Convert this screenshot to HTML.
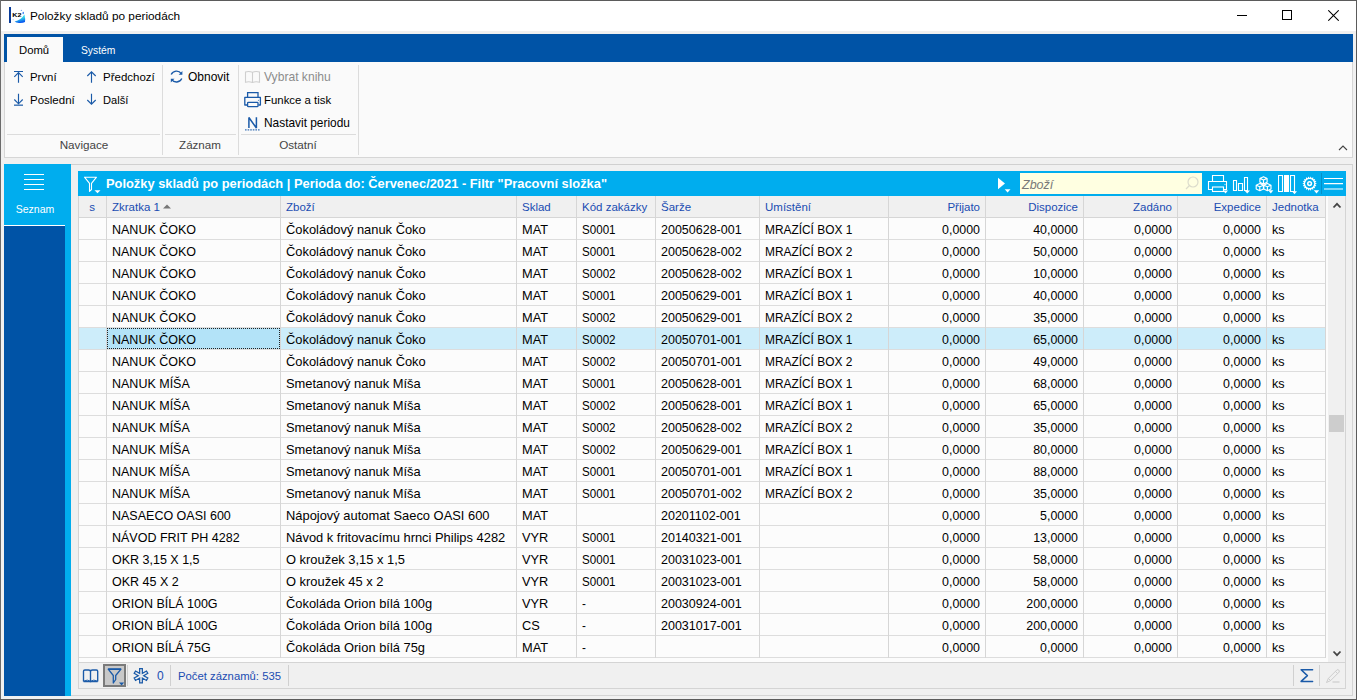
<!DOCTYPE html><html><head><meta charset="utf-8"><style>
*{margin:0;padding:0;box-sizing:border-box}
html,body{width:1357px;height:700px;overflow:hidden;background:#f0f0f0;font-family:"Liberation Sans",sans-serif;}
.a{position:absolute}
.t{position:absolute;white-space:nowrap;line-height:14px}
</style></head><body><div class="a" style="left:0px;top:0px;width:1357px;height:700px;background:#f0f0f0"></div>
<div class="a" style="left:0px;top:0px;width:1357px;height:31px;background:#ffffff"></div>
<svg class="a" style="left:6px;top:4px" width="24" height="22" viewBox="0 0 24 22"><defs><linearGradient id="g1" x1="0" y1="0" x2="0.3" y2="1"><stop offset="0" stop-color="#20e8f0"/><stop offset="0.55" stop-color="#30d0e8"/><stop offset="1" stop-color="#0a5af0"/></linearGradient></defs><rect x="3" y="3" width="2" height="16" fill="#0a3d9a"/><text x="6.2" y="12.9" font-family="Liberation Sans" font-weight="bold" font-size="5.6" textLength="9.2" lengthAdjust="spacingAndGlyphs" fill="#000">K2</text><path d="M18.4 10.6Q19.6 15.5 19 18Q17 19.3 13 19Q10 18.8 8.6 17.4Q15 16.4 18.4 10.6Z" fill="url(#g1)"/><ellipse cx="17.2" cy="9" rx="0.7" ry="1.3" fill="#2a78f0"/><circle cx="15.4" cy="6.4" r="0.7" fill="#4a90f0" opacity="0.7"/><circle cx="7.2" cy="15.6" r="0.6" fill="#80b0f0" opacity="0.6"/></svg>
<div class="t" style="left:30px;top:9px;font-size:11.8px;color:#000">Položky skladů po periodách</div>
<div class="a" style="left:1237px;top:15px;width:10px;height:1px;background:#000"></div>
<div class="a" style="left:1282px;top:10px;width:10px;height:10px;border:1px solid #000"></div>
<svg class="a" style="left:1328px;top:10px" width="11" height="11" viewBox="0 0 11 11"><path d="M0.3 0.3L10.7 10.7M10.7 0.3L0.3 10.7" stroke="#000" stroke-width="1.05"/></svg>
<div class="a" style="left:0px;top:0px;width:1357px;height:1px;background:#5b5b5b"></div>
<div class="a" style="left:0px;top:0px;width:1px;height:700px;background:#6b6b6b"></div>
<div class="a" style="left:1356px;top:0px;width:1px;height:700px;background:#5b5b5b"></div>
<div class="a" style="left:0px;top:699px;width:1357px;height:1px;background:#5b5b5b"></div>
<div class="a" style="left:4px;top:34px;width:1349px;height:28px;background:#0053a6"></div>
<div class="a" style="left:7px;top:37px;width:56px;height:25px;background:#fafafa"></div>
<div class="t" style="left:19px;top:43px;font-size:11.3px;color:#000">Domů</div>
<div class="t" style="left:81px;top:44px;font-size:10.3px;color:#fff">Systém</div>
<div class="a" style="left:4px;top:62px;width:1349px;height:96px;background:#fafafa;border:1px solid #d6d6d6;border-top:none"></div>
<div class="a" style="left:162px;top:65px;width:1px;height:90px;background:#dcdcdc"></div>
<div class="a" style="left:238px;top:65px;width:1px;height:90px;background:#dcdcdc"></div>
<div class="a" style="left:358px;top:65px;width:1px;height:90px;background:#dcdcdc"></div>
<div class="a" style="left:7px;top:134px;width:153px;height:1px;background:#dcdcdc"></div>
<div class="a" style="left:165px;top:134px;width:71px;height:1px;background:#dcdcdc"></div>
<div class="a" style="left:241px;top:134px;width:115px;height:1px;background:#dcdcdc"></div>
<div class="t" style="left:-16px;width:200px;text-align:center;top:138px;font-size:11.7px;color:#444">Navigace</div>
<div class="t" style="left:100px;width:200px;text-align:center;top:138px;font-size:11.6px;color:#444">Záznam</div>
<div class="t" style="left:198px;width:200px;text-align:center;top:138px;font-size:11.7px;color:#444">Ostatní</div>
<div class="t" style="left:30px;top:70px;font-size:11.4px;color:#000">První</div>
<div class="t" style="left:30px;top:93px;font-size:11.5px;color:#000">Poslední</div>
<div class="t" style="left:103px;top:70px;font-size:11.5px;color:#000">Předchozí</div>
<div class="t" style="left:103px;top:93px;font-size:11.1px;color:#000">Další</div>
<div class="t" style="left:188px;top:70px;font-size:12px;color:#000">Obnovit</div>
<div class="t" style="left:264px;top:70px;font-size:12.1px;color:#8c8c8c">Vybrat knihu</div>
<div class="t" style="left:264px;top:93px;font-size:11.4px;color:#000">Funkce a tisk</div>
<div class="t" style="left:264px;top:116px;font-size:11.9px;color:#000">Nastavit periodu</div>
<svg class="a" style="left:13px;top:69px" width="12" height="16" viewBox="0 0 12 16"><path d="M1 2.5H10M5.5 3.2V13.8M1.3 7.8L5.5 3.6L9.7 7.8" stroke="#1a5aa8" stroke-width="1.15" fill="none"/></svg>
<svg class="a" style="left:13px;top:92px" width="12" height="16" viewBox="0 0 12 16"><path d="M5.5 1.8V12.3M1.3 7.5L5.5 11.8L9.7 7.5" stroke="#1a5aa8" stroke-width="1.15" fill="none"/><path d="M1 13.2H10" stroke="#1a5aa8" stroke-width="1.5" opacity="0.8"/></svg>
<svg class="a" style="left:86px;top:69px" width="12" height="16" viewBox="0 0 12 16"><path d="M5.5 2.5V13.8M1.3 7L5.5 2.8L9.7 7" stroke="#1a5aa8" stroke-width="1.15" fill="none"/></svg>
<svg class="a" style="left:86px;top:92px" width="12" height="16" viewBox="0 0 12 16"><path d="M5.5 1.8V12.5M1.3 8L5.5 12.2L9.7 8" stroke="#1a5aa8" stroke-width="1.15" fill="none"/></svg>
<svg class="a" style="left:166px;top:66px" width="22" height="22" viewBox="0 0 22 22"><path d="M5.2 8.6A5.8 5.8 0 0 1 15.3 7.6M15.8 12.5A5.8 5.8 0 0 1 5.6 13.4" stroke="#1a5aa8" stroke-width="1.35" fill="none"/><path d="M16.4 5V8.7H12.7Z" fill="#1a5aa8"/><path d="M4.8 16.4V12.7H8.5Z" fill="#1a5aa8"/></svg>
<svg class="a" style="left:244px;top:70px" width="18" height="14" viewBox="0 0 18 14"><path d="M1.5 2Q5 0.8 8.5 2.3Q12 0.8 15.5 2V12.2Q12 11.2 8.5 12.5Q5 11.2 1.5 12.2Z M8.5 2.3V12.5" stroke="#cfcfcf" stroke-width="1.1" fill="none"/></svg>
<svg class="a" style="left:243px;top:91px" width="20" height="17" viewBox="0 0 20 17"><path d="M4.6 6.3V1.6H15V6.3" stroke="#1a5aa8" stroke-width="1.3" fill="none"/><path d="M4 14H1.8V6.4H17.4V14H15.4" stroke="#1a5aa8" stroke-width="1.3" fill="none" stroke-linejoin="round"/><rect x="4.6" y="11.3" width="10.4" height="4.4" rx="0.8" stroke="#1a5aa8" stroke-width="1.3" fill="#fafafa"/><circle cx="15.4" cy="9.2" r="0.5" fill="#1a5aa8"/></svg>
<svg class="a" style="left:244px;top:115px" width="18" height="17" viewBox="0 0 18 17"><path d="M4.9 13V2.5L12.4 13V2.2" stroke="#1a5aa8" stroke-width="1.5" fill="none" stroke-linejoin="bevel"/><path d="M1 14.8H16.5" stroke="#1a5aa8" stroke-width="1.3" stroke-dasharray="1.6 1" opacity="0.85"/></svg>
<svg class="a" style="left:1338px;top:145px" width="10" height="6" viewBox="0 0 10 6"><path d="M1 5L5 1L9 5" stroke="#444" stroke-width="1.1" fill="none"/></svg>
<div class="a" style="left:71px;top:164px;width:1282px;height:532px;background:#f0f0f0;border-top:1px solid #d0d0d0;border-right:1px solid #d4d4d4;border-bottom:1px solid #d4d4d4"></div>
<div class="a" style="left:4px;top:164px;width:67px;height:532px;background:#00adee"></div>
<div class="a" style="left:4px;top:226px;width:61px;height:470px;background:#0053a6"></div>
<div class="a" style="left:4px;top:225px;width:61px;height:1px;background:#ffffff"></div>
<div class="a" style="left:24px;top:174px;width:20px;height:1px;background:#fff"></div>
<div class="a" style="left:24px;top:179px;width:20px;height:1px;background:#fff"></div>
<div class="a" style="left:24px;top:184px;width:20px;height:1px;background:#fff"></div>
<div class="a" style="left:24px;top:189px;width:20px;height:1px;background:#fff"></div>
<div class="t" style="left:-65px;width:200px;text-align:center;top:202px;font-size:10.5px;color:#fff">Seznam</div>
<div class="a" style="left:78px;top:171px;width:1268px;height:518px;background:#fcfcfc;border:1px solid #d4d4d4"></div>
<div class="a" style="left:78px;top:171px;width:1268px;height:25px;background:#00adee"></div>
<svg class="a" style="left:83px;top:175px" width="20" height="20" viewBox="0 0 20 20"><path d="M1.5 2.2H13.5L8.5 8.3V14.5L6.5 16.3V8.3Z" stroke="#fff" stroke-width="1.1" fill="none" stroke-linejoin="round"/><path d="M11.5 15.2H17.5L14.5 18.3Z" fill="#fff"/></svg>
<div class="t" style="left:106px;top:177px;font-size:13.3px;font-weight:bold;color:#fff;transform:scaleX(0.967);transform-origin:0 0">Položky skladů po periodách | Perioda do: Červenec/2021 - Filtr "Pracovní složka"</div>
<svg class="a" style="left:997px;top:176px" width="15" height="18" viewBox="0 0 15 18"><path d="M1 1.8L8 7.5L1 13.2Z" fill="#fff"/><path d="M7.7 13.2H13.5L10.6 16.5Z" fill="#fff"/></svg>
<div class="a" style="left:1020px;top:173px;width:182px;height:21px;background:#ffffe1"></div>
<div class="t" style="left:1022px;top:178px;font-size:12.5px;font-style:italic;color:#787878">Zboží</div>
<svg class="a" style="left:1184px;top:175px" width="16" height="16" viewBox="0 0 16 16"><circle cx="9" cy="7" r="5" stroke="#dcdccc" stroke-width="1.2" fill="none"/><path d="M5.5 10.5L2 14" stroke="#dcdccc" stroke-width="1.2"/></svg>
<svg class="a" style="left:1207px;top:174px" width="22" height="21" viewBox="0 0 22 21"><path d="M5.5 7.5V1.5H16.5V7.5" stroke="#fff" stroke-width="1.1" fill="none"/><path d="M5 15.5H1.5V7.5H19.5V15.5H17" stroke="#fff" stroke-width="1.1" fill="none"/><rect x="5.5" y="13" width="11" height="4.5" stroke="#fff" stroke-width="1.1" fill="#00adee"/><path d="M17.5 10.5H18.5" stroke="#fff" stroke-width="0.8"/><path d="M16 16.5H21L18.5 19.5Z" fill="#fff"/></svg>
<svg class="a" style="left:1232px;top:175px" width="20" height="20" viewBox="0 0 20 20"><path d="M1.5 5.5H4.5V15.5H1.5ZM6.5 8.5H10.5V15.5H6.5ZM12.5 2.5H15.5V15.5H12.5Z" stroke="#fff" stroke-width="1.1" fill="none"/><path d="M12.5 15.5H18L15.2 18.5Z" fill="#fff"/></svg>
<svg class="a" style="left:1255px;top:175px" width="20" height="20" viewBox="0 0 20 20"><path d="M8.5 1.7000000000000002L12.1 3.4V7.2L8.5 8.9L4.9 7.2V3.4ZM4.9 3.4L8.5 5L12.1 3.4M8.5 5V8.9M4.8 8.5L8.4 10.200000000000001V14.0L4.8 15.700000000000001L1.1999999999999997 14.0V10.200000000000001ZM1.1999999999999997 10.200000000000001L4.8 11.8L8.4 10.200000000000001M4.8 11.8V15.700000000000001M12.4 8.5L16.0 10.200000000000001V14.0L12.4 15.700000000000001L8.8 14.0V10.200000000000001ZM8.8 10.200000000000001L12.4 11.8L16.0 10.200000000000001M12.4 11.8V15.700000000000001" stroke="#fff" stroke-width="1.15" fill="none" stroke-linejoin="round"/><path d="M13.3 15.2H18.3L15.8 18.5Z" fill="#fff"/></svg>
<svg class="a" style="left:1278px;top:175px" width="20" height="20" viewBox="0 0 20 20"><path d="M0.5 0.5H4.5V16.5H0.5ZM12.5 0.5H16.5V16.5H12.5Z" stroke="#fff" stroke-width="1.1" fill="none"/><rect x="6" y="0" width="5" height="17" fill="#fff"/><path d="M14 16.2H19L16.5 19.2Z" fill="#fff"/></svg>
<svg class="a" style="left:1302px;top:176px" width="20" height="19" viewBox="0 0 20 19"><polygon points="14.90,7.60 13.11,8.57 14.46,10.10 12.45,10.40 13.19,12.29 11.20,11.89 11.25,13.92 9.52,12.86 8.87,14.79 7.60,13.20 6.33,14.79 5.68,12.86 3.95,13.92 4.00,11.89 2.01,12.29 2.75,10.40 0.74,10.10 2.09,8.57 0.30,7.60 2.09,6.63 0.74,5.10 2.75,4.80 2.01,2.91 4.00,3.31 3.95,1.28 5.68,2.34 6.33,0.41 7.60,2.00 8.87,0.41 9.52,2.34 11.25,1.28 11.20,3.31 13.19,2.91 12.45,4.80 14.46,5.10 13.11,6.63" fill="#fff"/><circle cx="7.6" cy="7.6" r="4.5" fill="#00adee"/><circle cx="7.6" cy="7.6" r="2.6" fill="#fff"/><circle cx="7.6" cy="7.6" r="1.1" fill="#00adee"/><path d="M11.8 14.3H17.2L14.5 17.5Z" fill="#fff"/></svg>
<div class="a" style="left:1321px;top:173px;width:1px;height:21px;background:#0590c8"></div>
<svg class="a" style="left:1324px;top:174px" width="20" height="18" viewBox="0 0 20 18"><path d="M0 4.5H19M0 9.6H19M0 15H19" stroke="#fff" stroke-width="1.05"/></svg>
<div class="a" style="left:79px;top:196px;width:1247px;height:21px;background:#f0f0f0"></div>
<div class="a" style="left:79px;top:217px;width:1247px;height:1px;background:#d6d6d6"></div>
<div class="a" style="left:79px;top:239px;width:1247px;height:1px;background:#dddddd"></div>
<div class="a" style="left:79px;top:261px;width:1247px;height:1px;background:#dddddd"></div>
<div class="a" style="left:79px;top:283px;width:1247px;height:1px;background:#dddddd"></div>
<div class="a" style="left:79px;top:305px;width:1247px;height:1px;background:#dddddd"></div>
<div class="a" style="left:79px;top:327px;width:1247px;height:1px;background:#dddddd"></div>
<div class="a" style="left:79px;top:328px;width:1247px;height:21px;background:#cdedfa"></div>
<div class="a" style="left:107px;top:328px;width:173px;height:21px;background:#b3e3f8"></div>
<div class="a" style="left:107px;top:328px;width:173px;height:21px;border:1px dotted #222"></div>
<div class="a" style="left:79px;top:349px;width:1247px;height:1px;background:#dddddd"></div>
<div class="a" style="left:79px;top:371px;width:1247px;height:1px;background:#dddddd"></div>
<div class="a" style="left:79px;top:393px;width:1247px;height:1px;background:#dddddd"></div>
<div class="a" style="left:79px;top:415px;width:1247px;height:1px;background:#dddddd"></div>
<div class="a" style="left:79px;top:437px;width:1247px;height:1px;background:#dddddd"></div>
<div class="a" style="left:79px;top:459px;width:1247px;height:1px;background:#dddddd"></div>
<div class="a" style="left:79px;top:481px;width:1247px;height:1px;background:#dddddd"></div>
<div class="a" style="left:79px;top:503px;width:1247px;height:1px;background:#dddddd"></div>
<div class="a" style="left:79px;top:525px;width:1247px;height:1px;background:#dddddd"></div>
<div class="a" style="left:79px;top:547px;width:1247px;height:1px;background:#dddddd"></div>
<div class="a" style="left:79px;top:569px;width:1247px;height:1px;background:#dddddd"></div>
<div class="a" style="left:79px;top:591px;width:1247px;height:1px;background:#dddddd"></div>
<div class="a" style="left:79px;top:613px;width:1247px;height:1px;background:#dddddd"></div>
<div class="a" style="left:79px;top:635px;width:1247px;height:1px;background:#dddddd"></div>
<div class="a" style="left:79px;top:657px;width:1247px;height:1px;background:#dddddd"></div>
<div class="a" style="left:106px;top:196px;width:1px;height:462px;background:#d6d6d6"></div>
<div class="a" style="left:280px;top:196px;width:1px;height:462px;background:#d6d6d6"></div>
<div class="a" style="left:516px;top:196px;width:1px;height:462px;background:#d6d6d6"></div>
<div class="a" style="left:576px;top:196px;width:1px;height:462px;background:#d6d6d6"></div>
<div class="a" style="left:655px;top:196px;width:1px;height:462px;background:#d6d6d6"></div>
<div class="a" style="left:759px;top:196px;width:1px;height:462px;background:#d6d6d6"></div>
<div class="a" style="left:888px;top:196px;width:1px;height:462px;background:#d6d6d6"></div>
<div class="a" style="left:985px;top:196px;width:1px;height:462px;background:#d6d6d6"></div>
<div class="a" style="left:1083px;top:196px;width:1px;height:462px;background:#d6d6d6"></div>
<div class="a" style="left:1177px;top:196px;width:1px;height:462px;background:#d6d6d6"></div>
<div class="a" style="left:1266px;top:196px;width:1px;height:462px;background:#d6d6d6"></div>
<div class="a" style="left:1325px;top:196px;width:1px;height:462px;background:#d6d6d6"></div>
<div class="t" style="left:-8px;width:200px;text-align:center;top:200px;font-size:11.5px;color:#1a4cb2">s</div>
<div class="t" style="left:112px;top:200px;font-size:11.5px;color:#1a4cb2">Zkratka 1</div>
<div class="t" style="left:286px;top:200px;font-size:11.5px;color:#1a4cb2">Zboží</div>
<div class="t" style="left:522px;top:200px;font-size:11.5px;color:#1a4cb2">Sklad</div>
<div class="t" style="left:582px;top:200px;font-size:11.5px;color:#1a4cb2">Kód zakázky</div>
<div class="t" style="left:661px;top:200px;font-size:11.5px;color:#1a4cb2">Šarže</div>
<div class="t" style="left:765px;top:200px;font-size:11.5px;color:#1a4cb2">Umístění</div>
<div class="t" style="right:377px;top:200px;font-size:11.5px;color:#1a4cb2">Přijato</div>
<div class="t" style="right:279px;top:200px;font-size:11.5px;color:#1a4cb2">Dispozice</div>
<div class="t" style="right:185px;top:200px;font-size:11.5px;color:#1a4cb2">Zadáno</div>
<div class="t" style="right:96px;top:200px;font-size:11.5px;color:#1a4cb2">Expedice</div>
<div class="t" style="left:1272px;top:200px;font-size:11.5px;color:#1a4cb2">Jednotka</div>
<svg class="a" style="left:162px;top:203px" width="10" height="6"><path d="M1 5.5L5 1.5L9 5.5Z" fill="#777"/></svg>
<div class="t" style="left:112px;top:223px;font-size:12.5px;color:#000">NANUK ČOKO</div>
<div class="t" style="left:286px;top:223px;font-size:12.9px;color:#000">Čokoládový nanuk Čoko</div>
<div class="t" style="left:522px;top:223px;font-size:12.8px;color:#000">MAT</div>
<div class="t" style="left:582px;top:223px;font-size:12.5px;color:#000;transform:scaleX(0.928);transform-origin:0 0">S0001</div>
<div class="t" style="left:661px;top:223px;font-size:12.5px;color:#000">20050628-001</div>
<div class="t" style="left:765px;top:223px;font-size:12.5px;color:#000;transform:scaleX(0.952);transform-origin:0 0">MRAZÍCÍ BOX 1</div>
<div class="t" style="right:377px;top:223px;font-size:12.4px;color:#000">0,0000</div>
<div class="t" style="right:279px;top:223px;font-size:12.4px;color:#000">40,0000</div>
<div class="t" style="right:185px;top:223px;font-size:12.4px;color:#000">0,0000</div>
<div class="t" style="right:96px;top:223px;font-size:12.4px;color:#000">0,0000</div>
<div class="t" style="left:1272px;top:223px;font-size:12.6px;color:#000">ks</div>
<div class="t" style="left:112px;top:245px;font-size:12.5px;color:#000">NANUK ČOKO</div>
<div class="t" style="left:286px;top:245px;font-size:12.9px;color:#000">Čokoládový nanuk Čoko</div>
<div class="t" style="left:522px;top:245px;font-size:12.8px;color:#000">MAT</div>
<div class="t" style="left:582px;top:245px;font-size:12.5px;color:#000;transform:scaleX(0.928);transform-origin:0 0">S0001</div>
<div class="t" style="left:661px;top:245px;font-size:12.5px;color:#000">20050628-002</div>
<div class="t" style="left:765px;top:245px;font-size:12.5px;color:#000;transform:scaleX(0.952);transform-origin:0 0">MRAZÍCÍ BOX 2</div>
<div class="t" style="right:377px;top:245px;font-size:12.4px;color:#000">0,0000</div>
<div class="t" style="right:279px;top:245px;font-size:12.4px;color:#000">50,0000</div>
<div class="t" style="right:185px;top:245px;font-size:12.4px;color:#000">0,0000</div>
<div class="t" style="right:96px;top:245px;font-size:12.4px;color:#000">0,0000</div>
<div class="t" style="left:1272px;top:245px;font-size:12.6px;color:#000">ks</div>
<div class="t" style="left:112px;top:267px;font-size:12.5px;color:#000">NANUK ČOKO</div>
<div class="t" style="left:286px;top:267px;font-size:12.9px;color:#000">Čokoládový nanuk Čoko</div>
<div class="t" style="left:522px;top:267px;font-size:12.8px;color:#000">MAT</div>
<div class="t" style="left:582px;top:267px;font-size:12.5px;color:#000;transform:scaleX(0.928);transform-origin:0 0">S0002</div>
<div class="t" style="left:661px;top:267px;font-size:12.5px;color:#000">20050628-002</div>
<div class="t" style="left:765px;top:267px;font-size:12.5px;color:#000;transform:scaleX(0.952);transform-origin:0 0">MRAZÍCÍ BOX 1</div>
<div class="t" style="right:377px;top:267px;font-size:12.4px;color:#000">0,0000</div>
<div class="t" style="right:279px;top:267px;font-size:12.4px;color:#000">10,0000</div>
<div class="t" style="right:185px;top:267px;font-size:12.4px;color:#000">0,0000</div>
<div class="t" style="right:96px;top:267px;font-size:12.4px;color:#000">0,0000</div>
<div class="t" style="left:1272px;top:267px;font-size:12.6px;color:#000">ks</div>
<div class="t" style="left:112px;top:289px;font-size:12.5px;color:#000">NANUK ČOKO</div>
<div class="t" style="left:286px;top:289px;font-size:12.9px;color:#000">Čokoládový nanuk Čoko</div>
<div class="t" style="left:522px;top:289px;font-size:12.8px;color:#000">MAT</div>
<div class="t" style="left:582px;top:289px;font-size:12.5px;color:#000;transform:scaleX(0.928);transform-origin:0 0">S0001</div>
<div class="t" style="left:661px;top:289px;font-size:12.5px;color:#000">20050629-001</div>
<div class="t" style="left:765px;top:289px;font-size:12.5px;color:#000;transform:scaleX(0.952);transform-origin:0 0">MRAZÍCÍ BOX 1</div>
<div class="t" style="right:377px;top:289px;font-size:12.4px;color:#000">0,0000</div>
<div class="t" style="right:279px;top:289px;font-size:12.4px;color:#000">40,0000</div>
<div class="t" style="right:185px;top:289px;font-size:12.4px;color:#000">0,0000</div>
<div class="t" style="right:96px;top:289px;font-size:12.4px;color:#000">0,0000</div>
<div class="t" style="left:1272px;top:289px;font-size:12.6px;color:#000">ks</div>
<div class="t" style="left:112px;top:311px;font-size:12.5px;color:#000">NANUK ČOKO</div>
<div class="t" style="left:286px;top:311px;font-size:12.9px;color:#000">Čokoládový nanuk Čoko</div>
<div class="t" style="left:522px;top:311px;font-size:12.8px;color:#000">MAT</div>
<div class="t" style="left:582px;top:311px;font-size:12.5px;color:#000;transform:scaleX(0.928);transform-origin:0 0">S0002</div>
<div class="t" style="left:661px;top:311px;font-size:12.5px;color:#000">20050629-001</div>
<div class="t" style="left:765px;top:311px;font-size:12.5px;color:#000;transform:scaleX(0.952);transform-origin:0 0">MRAZÍCÍ BOX 2</div>
<div class="t" style="right:377px;top:311px;font-size:12.4px;color:#000">0,0000</div>
<div class="t" style="right:279px;top:311px;font-size:12.4px;color:#000">35,0000</div>
<div class="t" style="right:185px;top:311px;font-size:12.4px;color:#000">0,0000</div>
<div class="t" style="right:96px;top:311px;font-size:12.4px;color:#000">0,0000</div>
<div class="t" style="left:1272px;top:311px;font-size:12.6px;color:#000">ks</div>
<div class="t" style="left:112px;top:333px;font-size:12.5px;color:#000">NANUK ČOKO</div>
<div class="t" style="left:286px;top:333px;font-size:12.9px;color:#000">Čokoládový nanuk Čoko</div>
<div class="t" style="left:522px;top:333px;font-size:12.8px;color:#000">MAT</div>
<div class="t" style="left:582px;top:333px;font-size:12.5px;color:#000;transform:scaleX(0.928);transform-origin:0 0">S0002</div>
<div class="t" style="left:661px;top:333px;font-size:12.5px;color:#000">20050701-001</div>
<div class="t" style="left:765px;top:333px;font-size:12.5px;color:#000;transform:scaleX(0.952);transform-origin:0 0">MRAZÍCÍ BOX 1</div>
<div class="t" style="right:377px;top:333px;font-size:12.4px;color:#000">0,0000</div>
<div class="t" style="right:279px;top:333px;font-size:12.4px;color:#000">65,0000</div>
<div class="t" style="right:185px;top:333px;font-size:12.4px;color:#000">0,0000</div>
<div class="t" style="right:96px;top:333px;font-size:12.4px;color:#000">0,0000</div>
<div class="t" style="left:1272px;top:333px;font-size:12.6px;color:#000">ks</div>
<div class="t" style="left:112px;top:355px;font-size:12.5px;color:#000">NANUK ČOKO</div>
<div class="t" style="left:286px;top:355px;font-size:12.9px;color:#000">Čokoládový nanuk Čoko</div>
<div class="t" style="left:522px;top:355px;font-size:12.8px;color:#000">MAT</div>
<div class="t" style="left:582px;top:355px;font-size:12.5px;color:#000;transform:scaleX(0.928);transform-origin:0 0">S0002</div>
<div class="t" style="left:661px;top:355px;font-size:12.5px;color:#000">20050701-001</div>
<div class="t" style="left:765px;top:355px;font-size:12.5px;color:#000;transform:scaleX(0.952);transform-origin:0 0">MRAZÍCÍ BOX 2</div>
<div class="t" style="right:377px;top:355px;font-size:12.4px;color:#000">0,0000</div>
<div class="t" style="right:279px;top:355px;font-size:12.4px;color:#000">49,0000</div>
<div class="t" style="right:185px;top:355px;font-size:12.4px;color:#000">0,0000</div>
<div class="t" style="right:96px;top:355px;font-size:12.4px;color:#000">0,0000</div>
<div class="t" style="left:1272px;top:355px;font-size:12.6px;color:#000">ks</div>
<div class="t" style="left:112px;top:377px;font-size:12.5px;color:#000">NANUK MÍŠA</div>
<div class="t" style="left:286px;top:377px;font-size:12.9px;color:#000">Smetanový nanuk Míša</div>
<div class="t" style="left:522px;top:377px;font-size:12.8px;color:#000">MAT</div>
<div class="t" style="left:582px;top:377px;font-size:12.5px;color:#000;transform:scaleX(0.928);transform-origin:0 0">S0001</div>
<div class="t" style="left:661px;top:377px;font-size:12.5px;color:#000">20050628-001</div>
<div class="t" style="left:765px;top:377px;font-size:12.5px;color:#000;transform:scaleX(0.952);transform-origin:0 0">MRAZÍCÍ BOX 1</div>
<div class="t" style="right:377px;top:377px;font-size:12.4px;color:#000">0,0000</div>
<div class="t" style="right:279px;top:377px;font-size:12.4px;color:#000">68,0000</div>
<div class="t" style="right:185px;top:377px;font-size:12.4px;color:#000">0,0000</div>
<div class="t" style="right:96px;top:377px;font-size:12.4px;color:#000">0,0000</div>
<div class="t" style="left:1272px;top:377px;font-size:12.6px;color:#000">ks</div>
<div class="t" style="left:112px;top:399px;font-size:12.5px;color:#000">NANUK MÍŠA</div>
<div class="t" style="left:286px;top:399px;font-size:12.9px;color:#000">Smetanový nanuk Míša</div>
<div class="t" style="left:522px;top:399px;font-size:12.8px;color:#000">MAT</div>
<div class="t" style="left:582px;top:399px;font-size:12.5px;color:#000;transform:scaleX(0.928);transform-origin:0 0">S0002</div>
<div class="t" style="left:661px;top:399px;font-size:12.5px;color:#000">20050628-001</div>
<div class="t" style="left:765px;top:399px;font-size:12.5px;color:#000;transform:scaleX(0.952);transform-origin:0 0">MRAZÍCÍ BOX 1</div>
<div class="t" style="right:377px;top:399px;font-size:12.4px;color:#000">0,0000</div>
<div class="t" style="right:279px;top:399px;font-size:12.4px;color:#000">65,0000</div>
<div class="t" style="right:185px;top:399px;font-size:12.4px;color:#000">0,0000</div>
<div class="t" style="right:96px;top:399px;font-size:12.4px;color:#000">0,0000</div>
<div class="t" style="left:1272px;top:399px;font-size:12.6px;color:#000">ks</div>
<div class="t" style="left:112px;top:421px;font-size:12.5px;color:#000">NANUK MÍŠA</div>
<div class="t" style="left:286px;top:421px;font-size:12.9px;color:#000">Smetanový nanuk Míša</div>
<div class="t" style="left:522px;top:421px;font-size:12.8px;color:#000">MAT</div>
<div class="t" style="left:582px;top:421px;font-size:12.5px;color:#000;transform:scaleX(0.928);transform-origin:0 0">S0002</div>
<div class="t" style="left:661px;top:421px;font-size:12.5px;color:#000">20050628-002</div>
<div class="t" style="left:765px;top:421px;font-size:12.5px;color:#000;transform:scaleX(0.952);transform-origin:0 0">MRAZÍCÍ BOX 2</div>
<div class="t" style="right:377px;top:421px;font-size:12.4px;color:#000">0,0000</div>
<div class="t" style="right:279px;top:421px;font-size:12.4px;color:#000">35,0000</div>
<div class="t" style="right:185px;top:421px;font-size:12.4px;color:#000">0,0000</div>
<div class="t" style="right:96px;top:421px;font-size:12.4px;color:#000">0,0000</div>
<div class="t" style="left:1272px;top:421px;font-size:12.6px;color:#000">ks</div>
<div class="t" style="left:112px;top:443px;font-size:12.5px;color:#000">NANUK MÍŠA</div>
<div class="t" style="left:286px;top:443px;font-size:12.9px;color:#000">Smetanový nanuk Míša</div>
<div class="t" style="left:522px;top:443px;font-size:12.8px;color:#000">MAT</div>
<div class="t" style="left:582px;top:443px;font-size:12.5px;color:#000;transform:scaleX(0.928);transform-origin:0 0">S0002</div>
<div class="t" style="left:661px;top:443px;font-size:12.5px;color:#000">20050629-001</div>
<div class="t" style="left:765px;top:443px;font-size:12.5px;color:#000;transform:scaleX(0.952);transform-origin:0 0">MRAZÍCÍ BOX 1</div>
<div class="t" style="right:377px;top:443px;font-size:12.4px;color:#000">0,0000</div>
<div class="t" style="right:279px;top:443px;font-size:12.4px;color:#000">80,0000</div>
<div class="t" style="right:185px;top:443px;font-size:12.4px;color:#000">0,0000</div>
<div class="t" style="right:96px;top:443px;font-size:12.4px;color:#000">0,0000</div>
<div class="t" style="left:1272px;top:443px;font-size:12.6px;color:#000">ks</div>
<div class="t" style="left:112px;top:465px;font-size:12.5px;color:#000">NANUK MÍŠA</div>
<div class="t" style="left:286px;top:465px;font-size:12.9px;color:#000">Smetanový nanuk Míša</div>
<div class="t" style="left:522px;top:465px;font-size:12.8px;color:#000">MAT</div>
<div class="t" style="left:582px;top:465px;font-size:12.5px;color:#000;transform:scaleX(0.928);transform-origin:0 0">S0001</div>
<div class="t" style="left:661px;top:465px;font-size:12.5px;color:#000">20050701-001</div>
<div class="t" style="left:765px;top:465px;font-size:12.5px;color:#000;transform:scaleX(0.952);transform-origin:0 0">MRAZÍCÍ BOX 1</div>
<div class="t" style="right:377px;top:465px;font-size:12.4px;color:#000">0,0000</div>
<div class="t" style="right:279px;top:465px;font-size:12.4px;color:#000">88,0000</div>
<div class="t" style="right:185px;top:465px;font-size:12.4px;color:#000">0,0000</div>
<div class="t" style="right:96px;top:465px;font-size:12.4px;color:#000">0,0000</div>
<div class="t" style="left:1272px;top:465px;font-size:12.6px;color:#000">ks</div>
<div class="t" style="left:112px;top:487px;font-size:12.5px;color:#000">NANUK MÍŠA</div>
<div class="t" style="left:286px;top:487px;font-size:12.9px;color:#000">Smetanový nanuk Míša</div>
<div class="t" style="left:522px;top:487px;font-size:12.8px;color:#000">MAT</div>
<div class="t" style="left:582px;top:487px;font-size:12.5px;color:#000;transform:scaleX(0.928);transform-origin:0 0">S0001</div>
<div class="t" style="left:661px;top:487px;font-size:12.5px;color:#000">20050701-002</div>
<div class="t" style="left:765px;top:487px;font-size:12.5px;color:#000;transform:scaleX(0.952);transform-origin:0 0">MRAZÍCÍ BOX 2</div>
<div class="t" style="right:377px;top:487px;font-size:12.4px;color:#000">0,0000</div>
<div class="t" style="right:279px;top:487px;font-size:12.4px;color:#000">35,0000</div>
<div class="t" style="right:185px;top:487px;font-size:12.4px;color:#000">0,0000</div>
<div class="t" style="right:96px;top:487px;font-size:12.4px;color:#000">0,0000</div>
<div class="t" style="left:1272px;top:487px;font-size:12.6px;color:#000">ks</div>
<div class="t" style="left:112px;top:509px;font-size:12.5px;color:#000">NASAECO OASI 600</div>
<div class="t" style="left:286px;top:509px;font-size:12.9px;color:#000">Nápojový automat Saeco OASI 600</div>
<div class="t" style="left:522px;top:509px;font-size:12.8px;color:#000">MAT</div>
<div class="t" style="left:661px;top:509px;font-size:12.5px;color:#000">20201102-001</div>
<div class="t" style="right:377px;top:509px;font-size:12.4px;color:#000">0,0000</div>
<div class="t" style="right:279px;top:509px;font-size:12.4px;color:#000">5,0000</div>
<div class="t" style="right:185px;top:509px;font-size:12.4px;color:#000">0,0000</div>
<div class="t" style="right:96px;top:509px;font-size:12.4px;color:#000">0,0000</div>
<div class="t" style="left:1272px;top:509px;font-size:12.6px;color:#000">ks</div>
<div class="t" style="left:112px;top:531px;font-size:12.5px;color:#000">NÁVOD FRIT PH 4282</div>
<div class="t" style="left:286px;top:531px;font-size:12.9px;color:#000">Návod k fritovacímu hrnci Philips 4282</div>
<div class="t" style="left:522px;top:531px;font-size:12.8px;color:#000">VYR</div>
<div class="t" style="left:582px;top:531px;font-size:12.5px;color:#000;transform:scaleX(0.928);transform-origin:0 0">S0001</div>
<div class="t" style="left:661px;top:531px;font-size:12.5px;color:#000">20140321-001</div>
<div class="t" style="right:377px;top:531px;font-size:12.4px;color:#000">0,0000</div>
<div class="t" style="right:279px;top:531px;font-size:12.4px;color:#000">13,0000</div>
<div class="t" style="right:185px;top:531px;font-size:12.4px;color:#000">0,0000</div>
<div class="t" style="right:96px;top:531px;font-size:12.4px;color:#000">0,0000</div>
<div class="t" style="left:1272px;top:531px;font-size:12.6px;color:#000">ks</div>
<div class="t" style="left:112px;top:553px;font-size:12.5px;color:#000">OKR 3,15 X 1,5</div>
<div class="t" style="left:286px;top:553px;font-size:12.9px;color:#000">O kroužek 3,15 x 1,5</div>
<div class="t" style="left:522px;top:553px;font-size:12.8px;color:#000">VYR</div>
<div class="t" style="left:582px;top:553px;font-size:12.5px;color:#000;transform:scaleX(0.928);transform-origin:0 0">S0001</div>
<div class="t" style="left:661px;top:553px;font-size:12.5px;color:#000">20031023-001</div>
<div class="t" style="right:377px;top:553px;font-size:12.4px;color:#000">0,0000</div>
<div class="t" style="right:279px;top:553px;font-size:12.4px;color:#000">58,0000</div>
<div class="t" style="right:185px;top:553px;font-size:12.4px;color:#000">0,0000</div>
<div class="t" style="right:96px;top:553px;font-size:12.4px;color:#000">0,0000</div>
<div class="t" style="left:1272px;top:553px;font-size:12.6px;color:#000">ks</div>
<div class="t" style="left:112px;top:575px;font-size:12.5px;color:#000">OKR 45 X 2</div>
<div class="t" style="left:286px;top:575px;font-size:12.9px;color:#000">O kroužek 45 x 2</div>
<div class="t" style="left:522px;top:575px;font-size:12.8px;color:#000">VYR</div>
<div class="t" style="left:582px;top:575px;font-size:12.5px;color:#000;transform:scaleX(0.928);transform-origin:0 0">S0001</div>
<div class="t" style="left:661px;top:575px;font-size:12.5px;color:#000">20031023-001</div>
<div class="t" style="right:377px;top:575px;font-size:12.4px;color:#000">0,0000</div>
<div class="t" style="right:279px;top:575px;font-size:12.4px;color:#000">58,0000</div>
<div class="t" style="right:185px;top:575px;font-size:12.4px;color:#000">0,0000</div>
<div class="t" style="right:96px;top:575px;font-size:12.4px;color:#000">0,0000</div>
<div class="t" style="left:1272px;top:575px;font-size:12.6px;color:#000">ks</div>
<div class="t" style="left:112px;top:597px;font-size:12.5px;color:#000">ORION BÍLÁ 100G</div>
<div class="t" style="left:286px;top:597px;font-size:12.9px;color:#000">Čokoláda Orion bílá 100g</div>
<div class="t" style="left:522px;top:597px;font-size:12.8px;color:#000">VYR</div>
<div class="t" style="left:582px;top:597px;font-size:12.5px;color:#000;transform:scaleX(0.928);transform-origin:0 0">-</div>
<div class="t" style="left:661px;top:597px;font-size:12.5px;color:#000">20030924-001</div>
<div class="t" style="right:377px;top:597px;font-size:12.4px;color:#000">0,0000</div>
<div class="t" style="right:279px;top:597px;font-size:12.4px;color:#000">200,0000</div>
<div class="t" style="right:185px;top:597px;font-size:12.4px;color:#000">0,0000</div>
<div class="t" style="right:96px;top:597px;font-size:12.4px;color:#000">0,0000</div>
<div class="t" style="left:1272px;top:597px;font-size:12.6px;color:#000">ks</div>
<div class="t" style="left:112px;top:619px;font-size:12.5px;color:#000">ORION BÍLÁ 100G</div>
<div class="t" style="left:286px;top:619px;font-size:12.9px;color:#000">Čokoláda Orion bílá 100g</div>
<div class="t" style="left:522px;top:619px;font-size:12.8px;color:#000">CS</div>
<div class="t" style="left:582px;top:619px;font-size:12.5px;color:#000;transform:scaleX(0.928);transform-origin:0 0">-</div>
<div class="t" style="left:661px;top:619px;font-size:12.5px;color:#000">20031017-001</div>
<div class="t" style="right:377px;top:619px;font-size:12.4px;color:#000">0,0000</div>
<div class="t" style="right:279px;top:619px;font-size:12.4px;color:#000">200,0000</div>
<div class="t" style="right:185px;top:619px;font-size:12.4px;color:#000">0,0000</div>
<div class="t" style="right:96px;top:619px;font-size:12.4px;color:#000">0,0000</div>
<div class="t" style="left:1272px;top:619px;font-size:12.6px;color:#000">ks</div>
<div class="t" style="left:112px;top:641px;font-size:12.5px;color:#000">ORION BÍLÁ 75G</div>
<div class="t" style="left:286px;top:641px;font-size:12.9px;color:#000">Čokoláda Orion bílá 75g</div>
<div class="t" style="left:522px;top:641px;font-size:12.8px;color:#000">MAT</div>
<div class="t" style="left:582px;top:641px;font-size:12.5px;color:#000;transform:scaleX(0.928);transform-origin:0 0">-</div>
<div class="t" style="right:377px;top:641px;font-size:12.4px;color:#000">0,0000</div>
<div class="t" style="right:279px;top:641px;font-size:12.4px;color:#000">0,0000</div>
<div class="t" style="right:185px;top:641px;font-size:12.4px;color:#000">0,0000</div>
<div class="t" style="right:96px;top:641px;font-size:12.4px;color:#000">0,0000</div>
<div class="t" style="left:1272px;top:641px;font-size:12.6px;color:#000">ks</div>
<div class="a" style="left:1328px;top:196px;width:17px;height:466px;background:#f0f0f0"></div>
<div class="a" style="left:1329px;top:415px;width:15px;height:17px;background:#cdcdcd"></div>
<svg class="a" style="left:1332px;top:201px" width="10" height="8" viewBox="0 0 10 8"><path d="M1.5 6.5L5 2.8L8.5 6.5" stroke="#444" stroke-width="1.8" fill="none"/></svg>
<svg class="a" style="left:1332px;top:650px" width="10" height="8" viewBox="0 0 10 8"><path d="M1.5 1.5L5 5.2L8.5 1.5" stroke="#444" stroke-width="1.8" fill="none"/></svg>
<div class="a" style="left:78px;top:662px;width:1268px;height:27px;background:#f0f0f0;border:1px solid #d4d4d4"></div>
<svg class="a" style="left:82px;top:668px" width="18" height="16" viewBox="0 0 18 16"><path d="M1.5 13.6V3.2Q1.5 2 2.8 2H6.5Q8.5 2 8.5 3.8V14.3M8.5 3.8Q8.5 2 10.5 2H14.4Q15.7 2 15.7 3.2V13.6" stroke="#1a5aa8" stroke-width="1.35" fill="none"/><path d="M1.5 13.6H15.7" stroke="#1a5aa8" stroke-width="1.3"/><path d="M2 13Q5.2 11.2 8.5 13.2Q11.8 11.2 15.2 13" stroke="#1a5aa8" stroke-width="1" fill="none"/></svg>
<div class="a" style="left:103px;top:664px;width:23px;height:23px;background:#c8c8c8;border:2px solid #7a7a7a"></div>
<svg class="a" style="left:106px;top:667px" width="20" height="20" viewBox="0 0 20 20"><path d="M2.2 2.2H15L9.7 8.5V12.5L7.3 16V8.5Z" stroke="#1a5aa8" stroke-width="1.3" fill="none" stroke-linejoin="round"/><path d="M2.2 2.2H15" stroke="#1a5aa8" stroke-width="1.6"/><path d="M13 15.4H18.2L15.6 18.4Z" fill="#1a5aa8"/></svg>
<div class="a" style="left:127px;top:665px;width:1px;height:21px;background:#d0d0d0"></div>
<svg class="a" style="left:132.5px;top:667.5px" width="17" height="17" viewBox="0 0 17 17"><path d="M6.65 5.36 L6.65 0.60 L9.35 0.60 L9.35 5.36 L13.47 2.98 L14.82 5.32 L10.70 7.70 L14.82 10.08 L13.47 12.42 L9.35 10.04 L9.35 14.80 L6.65 14.80 L6.65 10.04 L2.53 12.42 L1.18 10.08 L5.30 7.70 L1.18 5.32 L2.53 2.98Z" stroke="#1a5aa8" stroke-width="1.25" fill="none" stroke-linejoin="miter"/></svg>
<div class="t" style="left:157px;top:669px;font-size:12px;color:#1a4cb2">0</div>
<div class="a" style="left:170px;top:665px;width:1px;height:21px;background:#d0d0d0"></div>
<div class="t" style="left:178px;top:669px;font-size:11.3px;color:#1a4cb2">Počet záznamů: 535</div>
<div class="a" style="left:288px;top:665px;width:1px;height:21px;background:#d0d0d0"></div>
<div class="a" style="left:1293px;top:665px;width:1px;height:21px;background:#d0d0d0"></div>
<div class="a" style="left:1319px;top:665px;width:1px;height:21px;background:#d0d0d0"></div>
<svg class="a" style="left:1299px;top:668px" width="16" height="16" viewBox="0 0 16 16"><path d="M13.6 1.8H2.1L8.4 7.6L2.1 13.4H13.6" stroke="#1a5aa8" stroke-width="1.5" fill="none" stroke-linecap="round" stroke-linejoin="round"/></svg>
<svg class="a" style="left:1325px;top:668px" width="17" height="17" viewBox="0 0 17 17"><path d="M1.5 14.5L3.4 10.4L11.9 1.9A1.6 1.6 0 0 1 14.1 4.1L5.6 12.6Z M10.4 3.4L12.6 5.6 M3.4 10.4L5.6 12.6" stroke="#cdcdcd" stroke-width="1" fill="none" stroke-linejoin="round"/><path d="M7.5 14H14.5" stroke="#cdcdcd" stroke-width="1.2"/></svg></body></html>
